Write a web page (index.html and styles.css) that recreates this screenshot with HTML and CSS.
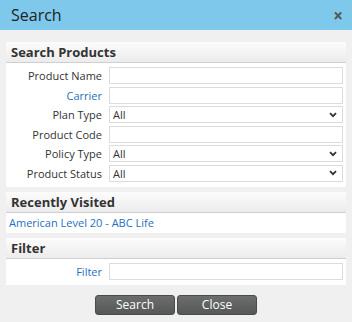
FILE: index.html
```html
<!DOCTYPE html>
<html lang="en">
<head>
    <meta charset="UTF-8">
    <title>Search</title>
    <link rel="stylesheet" href="styles.css">
</head>
<body>
    <header class="dialog-title">
        <h1>Search</h1>
        <span class="close">&times;</span>
    </header>

    <main class="dialog-body">
        <section class="panel">
            <h2>Search Products</h2>
            <div class="form-grid">
                <label>Product Name</label>
                <input type="text">
                <label class="link">Carrier</label>
                <input type="text">
                <label>Plan Type</label>
                <div class="select"><span>All</span><svg viewBox="0 0 8 6" width="8" height="6"><path d="M1 1.2 L4 4.2 L7 1.2" fill="none" stroke="#333" stroke-width="1.8"/></svg></div>
                <label>Product Code</label>
                <input type="text">
                <label>Policy Type</label>
                <div class="select"><span>All</span><svg viewBox="0 0 8 6" width="8" height="6"><path d="M1 1.2 L4 4.2 L7 1.2" fill="none" stroke="#333" stroke-width="1.8"/></svg></div>
                <label>Product Status</label>
                <div class="select"><span>All</span><svg viewBox="0 0 8 6" width="8" height="6"><path d="M1 1.2 L4 4.2 L7 1.2" fill="none" stroke="#333" stroke-width="1.8"/></svg></div>
            </div>
        </section>

        <section class="panel">
            <h2>Recently Visited</h2>
            <div class="recent">
                <a href="#">American Level 20 - ABC Life</a>
            </div>
        </section>

        <section class="panel">
            <h2>Filter</h2>
            <div class="form-grid">
                <label class="link">Filter</label>
                <input type="text">
            </div>
        </section>

        <div class="buttons">
            <button>Search</button>
            <button>Close</button>
        </div>
    </main>
</body>
</html>
```

FILE: styles.css
```css
body {
    font-family: 'Open Sans', sans-serif;
    margin: 0;
    padding: 0;
    background-color: #f0f0f0;
    color: #333;
}

.dialog-title {
    background-color: #7dc8eb;
    height: 30px;
    display: flex;
    align-items: center;
    justify-content: space-between;
    padding: 0 11px;
}

.dialog-title h1 {
    font-size: 16px;
    font-weight: normal;
    margin: 0;
    color: #222;
}

.close {
    font-size: 17px;
    font-weight: bold;
    color: #555;
    margin-right: -2px;
}

.dialog-body {
    padding: 12px 6px 0 6px;
    display: flex;
    flex-direction: column;
}

.panel {
    background-color: #fff;
    margin-bottom: 5px;
}

.panel h2 {
    font-size: 13px;
    font-weight: bold;
    margin: 0;
    height: 20px;
    line-height: 21px;
    padding: 0 5px;
    background: linear-gradient(#fcfcfc, #ececec);
    border-bottom: 1px solid #cfcfcf;
}

.form-grid {
    display: grid;
    grid-template-columns: 96px 1fr;
    column-gap: 7px;
    row-gap: 2.6px;
    padding: 4px 3px 5px 0;
    align-items: center;
}

.form-grid label {
    font-size: 11px;
    text-align: right;
}

.link,
.recent a {
    color: #1e6fc0;
    text-decoration: none;
}

.form-grid input,
.select {
    height: 17px;
    box-sizing: border-box;
    border: 1px solid #dcdcdc;
    background-color: #fff;
    margin: 0;
    padding: 0 3px;
}

.select {
    display: flex;
    justify-content: space-between;
    align-items: center;
    font-size: 11px;
    padding-right: 5px;
}

.recent {
    padding: 2px 3px 3px;
    font-size: 11px;
    height: 15px;
}

.buttons {
    display: flex;
    justify-content: center;
    gap: 2px;
    margin-top: 5px;
}

.buttons button {
    width: 80px;
    height: 20px;
    font-family: 'Open Sans', sans-serif;
    font-size: 12px;
    color: #fff;
    border: 1px solid #4a4c4b;
    border-radius: 3px;
    background: linear-gradient(#6b6e6c, #555857);
    padding: 0;
}
```
